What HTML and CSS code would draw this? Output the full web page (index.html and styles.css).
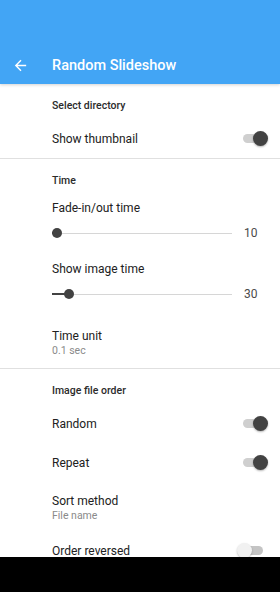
FILE: index.html
```html
<!DOCTYPE html>
<html lang="en">
<head>
<meta charset="utf-8">
<title>Random Slideshow</title>
<link rel="stylesheet" href="styles.css">
</head>
<body>
<div class="screen">
  <header class="appbar">
    <div class="appbar-row">
      <svg class="back" viewBox="0 0 24 24" width="17" height="17" aria-hidden="true"><path fill="#fff" d="M20 11H7.83l5.59-5.59L12 4l-8 8 8 8 1.41-1.41L7.83 13H20v-2z"/></svg>
      <span class="title">Random Slideshow</span>
    </div>
  </header>
  <main class="list">
    <div class="cat">Select directory</div>
    <div class="pref switch-row">
      <span class="pref-title">Show thumbnail</span>
      <span class="switch on"><span class="knob"></span></span>
    </div>
    <div class="divider"></div>

    <div class="cat">Time</div>
    <div class="pref slider-pref">
      <div class="pref-title">Fade-in/out time</div>
      <div class="slider-row">
        <div class="track"><div class="fill" style="width:5px"></div><span class="thumb" style="left:5px"></span></div>
        <span class="value">10</span>
      </div>
    </div>
    <div class="pref slider-pref">
      <div class="pref-title">Show image time</div>
      <div class="slider-row">
        <div class="track"><div class="fill" style="width:17px"></div><span class="thumb" style="left:17px"></span></div>
        <span class="value">30</span>
      </div>
    </div>
    <div class="pref two-line">
      <div class="pref-title">Time unit</div>
      <div class="summary">0.1 sec</div>
    </div>
    <div class="divider"></div>

    <div class="cat">Image file order</div>
    <div class="pref switch-row">
      <span class="pref-title">Random</span>
      <span class="switch on"><span class="knob"></span></span>
    </div>
    <div class="pref switch-row">
      <span class="pref-title">Repeat</span>
      <span class="switch on"><span class="knob"></span></span>
    </div>
    <div class="pref two-line last">
      <div class="pref-title">Sort method</div>
      <div class="summary">File name</div>
    </div>
    <div class="pref switch-row">
      <span class="pref-title">Order reversed</span>
      <span class="switch off"><span class="knob"></span></span>
    </div>
  </main>
  <div class="navbar"></div>
</div>
</body>
</html>
```
FILE: styles.css
```css
* { box-sizing: border-box; }
html, body { margin: 0; padding: 0; }
body {
  width: 280px;
  height: 592px;
  overflow: hidden;
  background: #fff;
  font-family: Roboto, "Noto Sans", "Liberation Sans", sans-serif;
  color: #212121;
}
.screen {
  display: flex;
  flex-direction: column;
  height: 592px;
}
.appbar {
  height: 84px;
  flex: 0 0 84px;
  background: #42a5f5;
  padding-top: 46px;
  display: flex;
  align-items: center;
  box-shadow: 0 1px 3px rgba(0,0,0,0.18);
  position: relative;
  z-index: 1;
}
.appbar-row {
  display: flex;
  align-items: center;
  height: 38px;
  width: 100%;
}
.back {
  margin-left: 12px;
  flex: 0 0 auto;
}
.title {
  margin-left: 23px;
  color: #fff;
  font-size: 14.5px;
  font-weight: 500;
}
.list {
  flex: 1 1 auto;
  overflow: hidden;
}
.cat {
  height: 35px;
  padding: 15px 0 0 52px;
  font-size: 10.5px;
  line-height: 14px;
  font-weight: 500;
  color: #2b2b2b;
}
.pref { padding-left: 52px; }
.pref-title {
  font-size: 12px;
  line-height: 16px;
  color: #212121;
}
.switch-row {
  height: 39px;
  display: flex;
  align-items: center;
  justify-content: space-between;
  padding-right: 14px;
}
.switch {
  position: relative;
  width: 20px;
  height: 9px;
  border-radius: 5px;
  background: #cfcfcf;
  margin-right: 3px;
}
.switch .knob {
  position: absolute;
  top: -3px;
  width: 15px;
  height: 15px;
  border-radius: 50%;
  box-shadow: 0 1px 2px rgba(0,0,0,0.3);
}
.switch.on .knob { right: -5px; background: #424242; }
.switch.off { background: #c4c4c4; }
.switch.off .knob { left: -6px; background: #f1f1f1; box-shadow: 0 1px 2px rgba(0,0,0,0.25); }
.divider {
  height: 1px;
  background: #e0e0e0;
}
.slider-pref {
  height: 61px;
  padding-top: 6px;
}
.slider-row {
  margin-top: 6px;
  height: 22px;
  display: flex;
  align-items: center;
}
.track {
  position: relative;
  width: 180px;
  height: 1px;
  background: #d6d6d6;
}
.fill {
  position: absolute;
  left: 0;
  top: -0.5px;
  height: 2px;
  background: #424242;
}
.thumb {
  position: absolute;
  top: -4.5px;
  width: 10px;
  height: 10px;
  margin-left: -5px;
  border-radius: 50%;
  background: #424242;
}
.value {
  margin-left: 12px;
  font-size: 12px;
  color: #4a4a4a;
}
.two-line {
  height: 52px;
  padding-top: 12px;
}
.two-line.last {
  height: 49px;
  padding-top: 11px;
}
.summary {
  font-size: 10.5px;
  line-height: 14px;
  color: #8a8a8a;
  margin-top: 0;
}
.navbar {
  flex: 0 0 35px;
  height: 35px;
  background: #000;
}
```
